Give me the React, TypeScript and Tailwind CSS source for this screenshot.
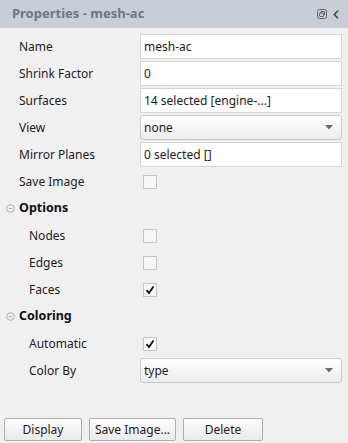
import React from "react";

const font = { fontFamily: '"Noto Sans", "Open Sans", sans-serif' };

function TextBox({ value }: { value: string }) {
  return (
    <div className="flex h-[25px] flex-1 items-center border border-[#d4d4d4] bg-white pl-[3px] text-[12px] text-[#1e1a1e]">
      {value}
    </div>
  );
}

function SelectBox({ value }: { value: string }) {
  return (
    <div className="flex h-[25px] flex-1 items-center justify-between rounded-[3px] border border-[#c8c8c8] bg-gradient-to-b from-white to-[#ececec] pl-[3px] pr-[8px] text-[12px] text-[#1e1a1e]">
      <span>{value}</span>
      <svg width="8" height="5" viewBox="0 0 8 5">
        <path d="M0 0 H8 L4 4.5 Z" fill="#6a6a6a" />
      </svg>
    </div>
  );
}

function Check({ checked }: { checked?: boolean }) {
  return (
    <div className="ml-[3px] flex h-[14px] w-[14px] items-center justify-center border border-[#c4c4c4] bg-[#f7f7f7]">
      {checked && (
        <svg width="10" height="10" viewBox="0 0 10 10">
          <path d="M1.5 5.2 L4 8 L8.5 1.5" fill="none" stroke="#111" strokeWidth="1.8" />
        </svg>
      )}
    </div>
  );
}

function Row({
  label,
  indent,
  children,
}: {
  label: string;
  indent?: boolean;
  children?: React.ReactNode;
}) {
  return (
    <div className="flex h-[27px] items-center pr-[6px]">
      <div
        className={
          indent
            ? "w-[140px] pl-[29px] text-[12px] text-[#1e1a1e]"
            : "w-[140px] pl-[19px] text-[12px] text-[#1e1a1e]"
        }
      >
        {label}
      </div>
      <div className="flex flex-1 items-center">{children}</div>
    </div>
  );
}

function Section({ label }: { label: string }) {
  return (
    <div className="flex h-[27px] items-center">
      <div className="flex w-[19px] justify-center pl-[1px]">
        <svg width="9" height="9" viewBox="0 0 9 9">
          <circle cx="4.5" cy="4.5" r="3.8" fill="none" stroke="#a8a8a8" strokeWidth="0.9" />
          <path d="M2.7 4.5 H6.3" stroke="#a8a8a8" strokeWidth="0.9" />
        </svg>
      </div>
      <span className="text-[12.5px] font-bold text-[#111]">{label}</span>
    </div>
  );
}

function Button({ label, w }: { label: string; w: string }) {
  return (
    <div
      className={
        "flex h-[23px] items-center justify-center rounded-[2px] border border-[#adadad] bg-gradient-to-b from-[#fdfdfd] to-[#eaeaea] text-[12px] text-[#1e1a1e] " +
        w
      }
    >
      {label}
    </div>
  );
}

export default function App() {
  return (
    <div className="flex h-[443px] w-[348px] flex-col bg-[#f0f0f0]" style={font}>
      <div className="flex h-[28px] items-center justify-between bg-[#c9ced6] pl-[12px] pr-[9px]">
        <span className="text-[13px] font-bold text-[#6b7684]">Properties - mesh-ac</span>
        <div className="flex items-center gap-[6px]">
          <svg width="10" height="10" viewBox="0 0 10 10">
            <rect x="0.5" y="0.5" width="9" height="9" rx="2" fill="none" stroke="#666" strokeWidth="1" />
            <rect x="2.5" y="4" width="4" height="3.5" rx="0.5" fill="none" stroke="#666" strokeWidth="1" />
            <path d="M4 4 V2.5 H7.5 V5.8 H6.5" fill="none" stroke="#666" strokeWidth="1" />
          </svg>
          <svg width="6" height="9" viewBox="0 0 6 9">
            <path d="M5 0.8 L1.3 4.5 L5 8.2" fill="none" stroke="#444" strokeWidth="1.6" />
          </svg>
        </div>
      </div>
      <div className="flex flex-col pt-[5px]">
        <Row label="Name">
          <TextBox value="mesh-ac" />
        </Row>
        <Row label="Shrink Factor">
          <TextBox value="0" />
        </Row>
        <Row label="Surfaces">
          <TextBox value="14 selected [engine-...]" />
        </Row>
        <Row label="View">
          <SelectBox value="none" />
        </Row>
        <Row label="Mirror Planes">
          <TextBox value="0 selected []" />
        </Row>
        <Row label="Save Image">
          <Check />
        </Row>
        <Section label="Options" />
        <Row label="Nodes" indent>
          <Check />
        </Row>
        <Row label="Edges" indent>
          <Check />
        </Row>
        <Row label="Faces" indent>
          <Check checked />
        </Row>
        <Section label="Coloring" />
        <Row label="Automatic" indent>
          <Check checked />
        </Row>
        <Row label="Color By" indent>
          <SelectBox value="type" />
        </Row>
      </div>
      <div className="mt-[34px] flex gap-[7px] pl-[4px]">
        <Button label="Display" w="w-[78px]" />
        <Button label="Save Image..." w="w-[87px]" />
        <Button label="Delete" w="w-[80px]" />
      </div>
    </div>
  );
}
